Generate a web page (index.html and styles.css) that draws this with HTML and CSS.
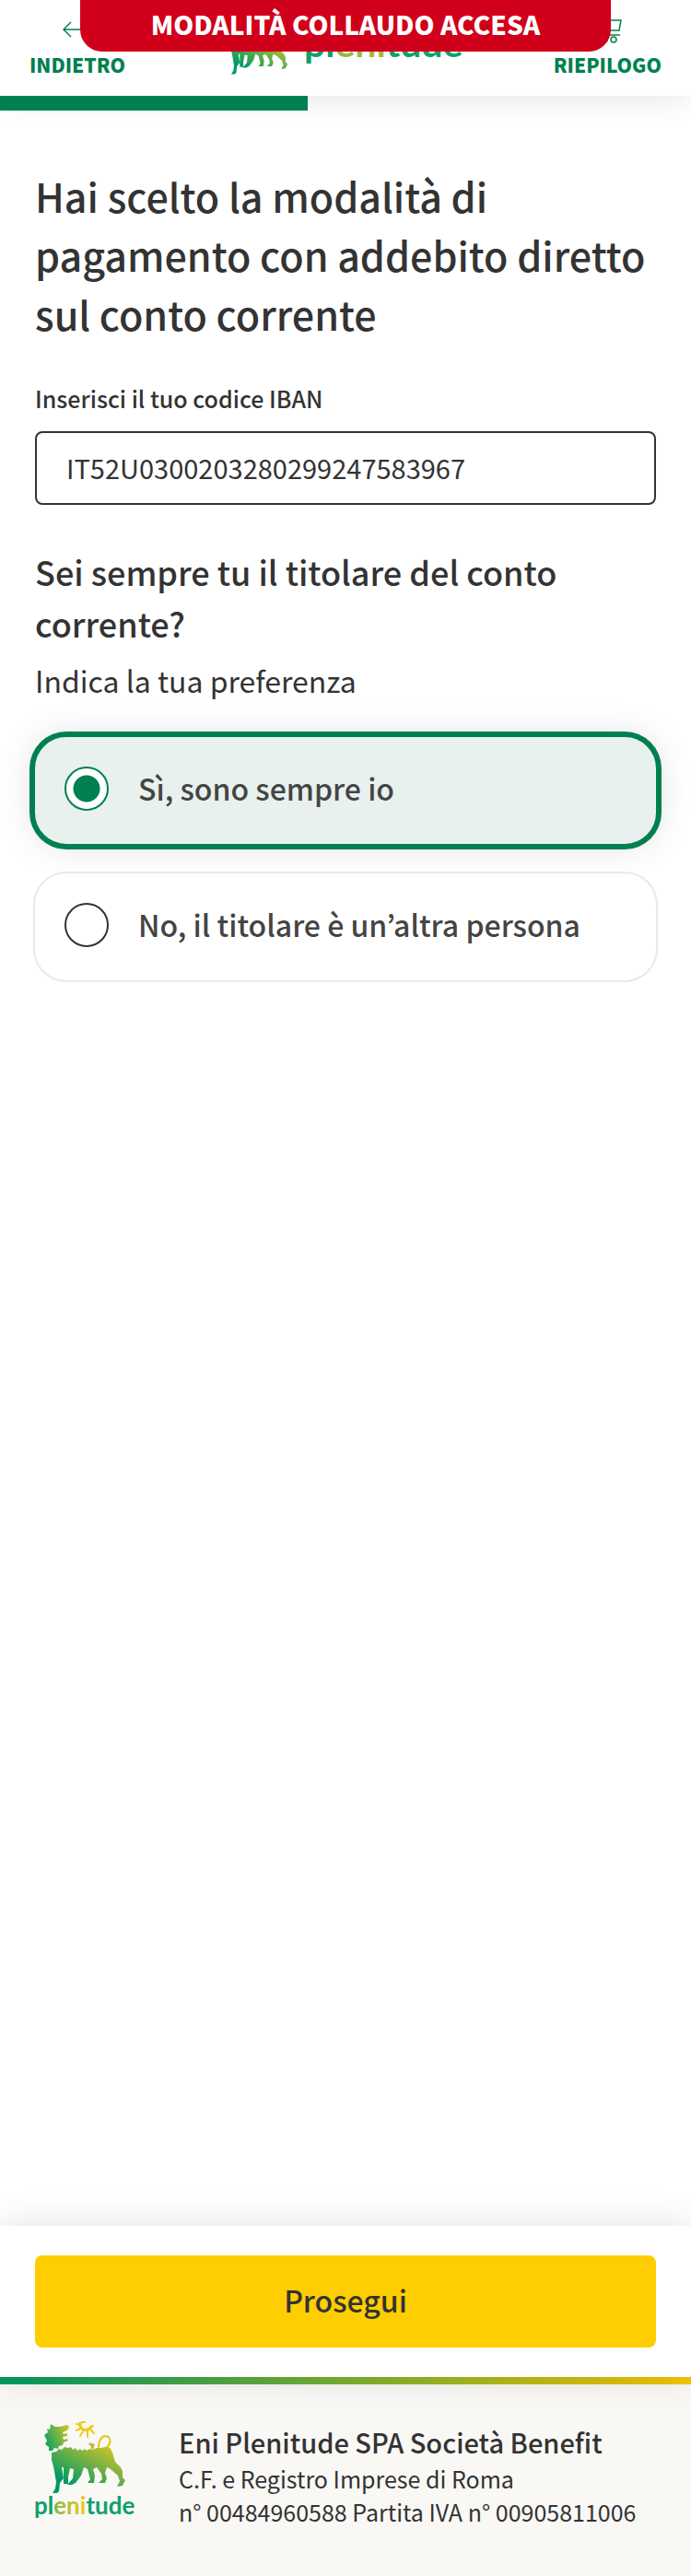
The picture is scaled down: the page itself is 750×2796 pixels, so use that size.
FILE: index.html
```html
<!DOCTYPE html>
<html lang="it">
<head>
<meta charset="utf-8">
<meta name="viewport" content="width=device-width, initial-scale=1">
<title>Plenitude - Modalità di pagamento</title>
<link rel="stylesheet" href="styles.css">
</head>
<body>
<svg class="defs" aria-hidden="true">
  <defs>
    <linearGradient id="brand" gradientUnits="userSpaceOnUse" x1="30" y1="64" x2="62" y2="4">
      <stop offset="0" stop-color="#009b63"/>
      <stop offset="0.65" stop-color="#a3ba38"/>
      <stop offset="1" stop-color="#f6cb10"/>
    </linearGradient>
    <linearGradient id="head" gradientUnits="userSpaceOnUse" x1="12" y1="20" x2="38" y2="8">
      <stop offset="0" stop-color="#1fa463"/>
      <stop offset="1" stop-color="#d2c524"/>
    </linearGradient>
    <linearGradient id="word">
      <stop offset="0.18" stop-color="#10a068"/>
      <stop offset="0.22" stop-color="#8db84a"/>
      <stop offset="0.5" stop-color="#e8ca1c"/>
      <stop offset="0.52" stop-color="#10a068"/>
    </linearGradient>
    <linearGradient id="word-header">
      <stop offset="0.18" stop-color="#10a068"/>
      <stop offset="0.22" stop-color="#8fb94c"/>
      <stop offset="0.5" stop-color="#a8bb34"/>
      <stop offset="0.52" stop-color="#10a068"/>
    </linearGradient>
    <symbol id="dog" viewBox="0 0 100 80">
      <path fill="url(#head)" d="M17 3L22 6L27 6L35 4L37 6L35 10L30 12L31 14L35 13L35 16L30 17L31 20L35 19L36 21L31 23L30 26L26 27L25 30L21 29L19 32L15 32L15 28L11 25L13 21L10 15L14 12L13 8L16 9Z"/>
      <path fill="url(#brand)" d="M18 34L23 33L26 30L29 31L32 28L36 29L39 28L41 31L44 29L46 32L49 30L51 32L54 30L56 32L59 30L62 31L67 29L72 29L79 27L82 30L84 34L87 44L93 50L95 54L95 61L98 64L95 70L89 71L92 65L90 59L82 52L78 50L76 56L78 62L76 67L69 67L73 63L72 57L67 50L63 52L65 59L64 67L57 67L60 63L57 52L53 50L50 59L44 67L40 69L35 69L41 62L42 52L38 51L36 60L36 68L31 68L31 50L29 50L31 62L27 67L26 76L24 78L19 78L22 73L23 66L20 49L18 42Z"/>
      <g fill="none" stroke-linecap="round">
        <path stroke="#dfc81d" stroke-width="2" d="M69 28C69 21 72 16 77 16C82 17 83 23 79 27"/>
        <path stroke="#b9bf2e" stroke-width="3" d="M60 25L63 26L62 29"/>
        <path stroke="#efca15" stroke-width="3" d="M49 2C48 10 57 12 61 6"/>
        <path stroke="#efca15" stroke-width="2" d="M49 8L45 10M52 11L49 16M57 11L57 17M60 9L64 13M61 6L63 5M49 4L45 3M51 1L54 1"/>
      </g>
    </symbol>
  </defs>
</svg>

<header class="header">
  <button class="nav" type="button">
    <svg class="nav-icon" viewBox="0 0 32 32" aria-hidden="true"><path d="M31 16H2M9 8L1 16L9 24"/></svg>
    INDIETRO
  </button>
  <svg class="header-logo" viewBox="0 0 264 64" role="img" aria-label="plenitude">
    <use href="#dog" x="0" y="0" width="78" height="62"/>
    <text class="wordmark" x="94" y="42" font-size="41" fill="url(#word-header)">plenitude</text>
  </svg>
  <button class="nav" type="button">
    <svg class="nav-icon" viewBox="0 0 32 32" aria-hidden="true"><path d="M1 2H6L11 22H30M7 6H31L29 17H10"/><circle cx="13" cy="27" r="3"/><circle cx="23" cy="27" r="3"/></svg>
    RIEPILOGO
  </button>
  <div class="banner">MODALITÀ COLLAUDO ACCESA</div>
</header>
<div class="progress" role="progressbar" aria-label="Avanzamento"><div class="progress-bar"></div></div>

<main class="main">
  <h1 class="title">Hai scelto la modalità di pagamento con addebito diretto sul conto corrente</h1>
  <label class="field-label" for="iban">Inserisci il tuo codice IBAN</label>
  <input class="field" id="iban" type="text" value="IT52U0300203280299247583967">
  <h2 class="subtitle" id="holder">Sei sempre tu il titolare del conto corrente?</h2>
  <p class="hint">Indica la tua preferenza</p>
  <div class="options" role="radiogroup" aria-labelledby="holder">
    <label class="option"><input class="radio" type="radio" name="holder" checked><span>Sì, sono sempre io</span></label>
    <label class="option"><input class="radio" type="radio" name="holder"><span>No, il titolare è un’altra persona</span></label>
  </div>
</main>

<div class="actions"><button class="submit" type="button">Prosegui</button></div>
<footer class="footer">
  <svg class="footer-logo" viewBox="0 0 108 108" role="img" aria-label="plenitude">
    <use href="#dog" x="0" y="0" width="100" height="80"/>
    <text class="wordmark" x="-1" y="101" font-size="26" fill="url(#word)">plenitude</text>
  </svg>
  <div class="company">
    <strong class="company-name">Eni Plenitude SPA Società Benefit</strong>
    <p class="company-data">C.F. e Registro Imprese di Roma<br>n° 00484960588 Partita IVA n° 00905811006</p>
  </div>
</footer>
</body>
</html>
```
FILE: styles.css
```css
* { box-sizing: border-box; }

body {
  display: flex;
  flex-direction: column;
  min-height: 100vh;
  margin: 0;
  background: #fff;
  color: #333;
  font-family: "Noto Sans CJK KR", "Noto Sans", sans-serif;
}

button, input { color: inherit; font-family: inherit; }

.defs { position: absolute; width: 0; height: 0; }

.header {
  position: relative;
  display: flex;
  justify-content: space-between;
  align-items: flex-start;
  height: 104px;
  padding: 16px 32px 0;
  background: #fff;
  box-shadow: 0 0 32px rgba(0, 0, 0, 0.12);
}

.nav {
  display: flex;
  flex-direction: column;
  align-items: center;
  gap: 6px;
  padding: 0;
  border: 0;
  background: none;
  color: #00804f;
  font-size: 21px;
  font-weight: 900;
  line-height: 32px;
}

.nav-icon {
  width: 32px;
  height: 32px;
  fill: none;
  stroke: #00804f;
  stroke-width: 1.5;
}

.header-logo { width: 264px; height: 64px; margin-top: 4px; overflow: visible; }

.wordmark { font-family: Lato, sans-serif; font-weight: 700; }

.banner {
  position: absolute;
  top: 0;
  left: 50%;
  width: 576px;
  max-width: 100%;
  padding-bottom: 4px;
  transform: translateX(-50%);
  border-radius: 0 0 24px 24px;
  background: #d0001a;
  color: #fff;
  font-size: 28px;
  font-weight: 900;
  line-height: 52px;
  text-align: center;
}

.progress { position: relative; height: 16px; }
.progress-bar { width: 44.5%; height: 100%; background: #00804f; }

.main { flex: 1; padding: 60px 38px 32px; }

.title { margin: 0; font-size: 43px; font-weight: 500; line-height: 64px; }

.field-label {
  display: block;
  margin: 42px 0 18px;
  font-size: 25px;
  font-weight: 500;
  line-height: 36px;
}

.field {
  display: block;
  width: 100%;
  height: 80px;
  padding: 0 32px 2px;
  border: 2px solid #333;
  border-radius: 8px;
  background: #fff;
  font-size: 29px;
}

.subtitle { margin: 44px 0 0; font-size: 36px; font-weight: 500; line-height: 56px; }
.hint { margin: 10px 0 36px; font-size: 32px; line-height: 48px; }

.options { display: grid; gap: 28px; margin: 0 -2px; }

.option {
  display: flex;
  gap: 32px;
  min-height: 120px;
  padding: 32px;
  border: 2px solid #e9e9e9;
  border-radius: 36px;
  color: #444;
  font-size: 32px;
  font-weight: 500;
  line-height: 46px;
}

.option:has(:checked) {
  border-color: #00804f;
  background: #e8f1ee;
  box-shadow: 0 0 0 4px #00804f, 0 0 40px rgba(0, 0, 0, 0.12);
}

.radio {
  flex: none;
  width: 48px;
  height: 48px;
  margin: 0;
  border: 2px solid #333;
  border-radius: 50%;
  background: #fff;
  appearance: none;
}

.radio:checked {
  border-color: #00804f;
  background: radial-gradient(circle, #00804f 14px, #fff 15px);
}

.actions {
  position: relative;
  padding: 32px 38px;
  background: #fff;
  box-shadow: 0 0 40px rgba(0, 0, 0, 0.12);
}

.submit {
  display: block;
  width: 100%;
  height: 100px;
  padding: 0 0 4px;
  border: 0;
  border-radius: 8px;
  background: #ffce00;
  font-size: 32px;
  font-weight: 500;
}

.footer {
  display: flex;
  gap: 48px;
  min-height: 216px;
  padding: 40px 38px;
  border-top: 8px solid;
  border-image: linear-gradient(90deg, #009b63, #f8c600) 1;
  background: #f9f8f5;
}

.footer-logo { flex: none; width: 108px; height: 108px; overflow: visible; }
.company-name { display: block; font-size: 29px; font-weight: 500; line-height: 44px; }
.company-data { margin: 0; font-size: 25px; line-height: 36px; }
```
